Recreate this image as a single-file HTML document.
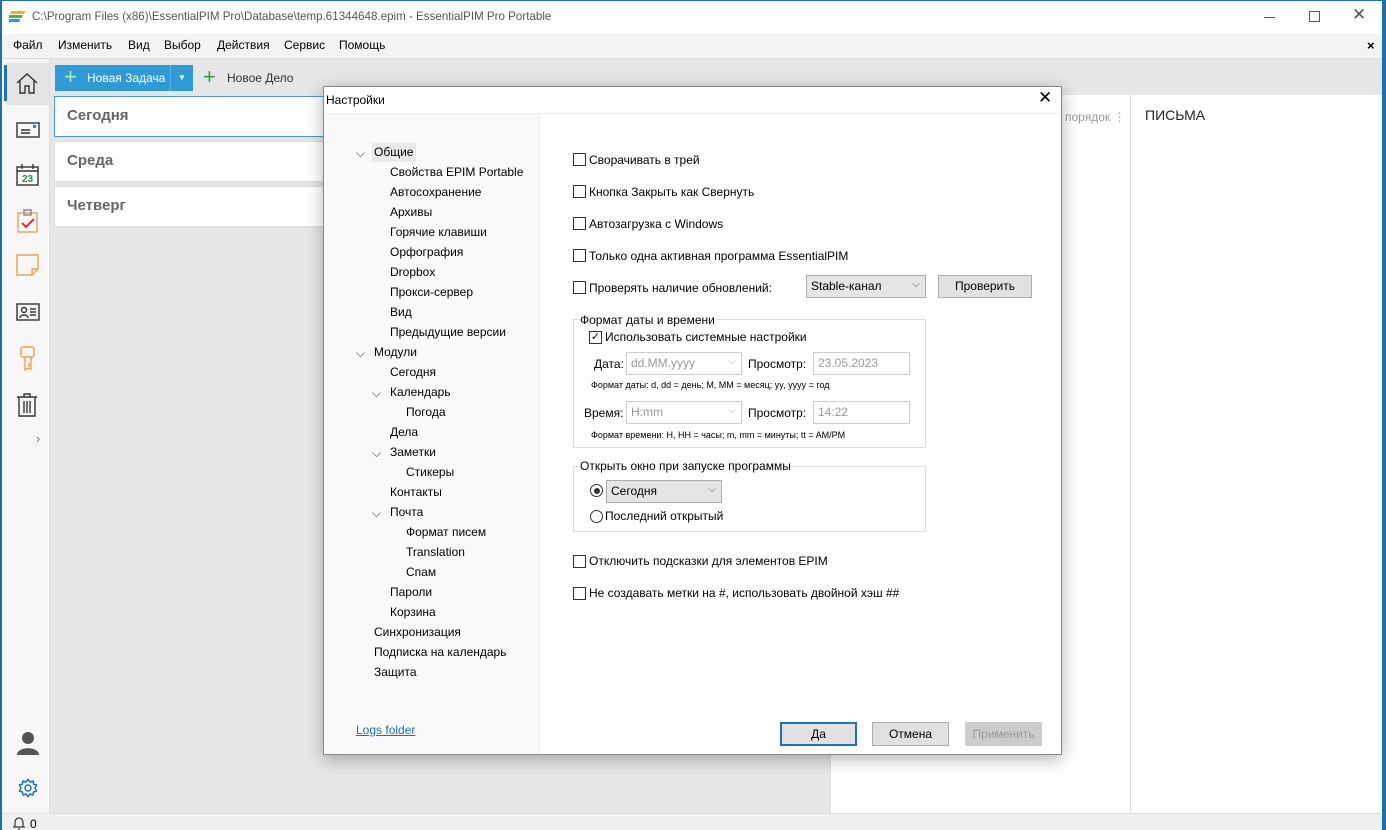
<!DOCTYPE html>
<html><head><meta charset="utf-8">
<style>
*{box-sizing:border-box;margin:0;padding:0}
body{width:1386px;height:830px;overflow:hidden;position:relative;background:#1e6fb0;font-family:"Liberation Sans","DejaVu Sans",sans-serif;font-size:12px;color:#000}
.a{position:absolute}
.win{left:2px;top:1px;width:1380px;height:829px;background:#fff;overflow:hidden}
.cb{width:13px;height:13px;border:1px solid #333;background:#fff}
.btn{background:#e1e1e1;border:1px solid #adadad;text-align:center;font-size:12px}
.combo{background:#e5e5e5;border:1px solid #adadad;font-size:12px;padding:3px 4px}
.dis{background:#fff;border:1px solid #ccc;color:#999;font-size:12px;padding:3px 4px}
.tree div{position:absolute;font-size:12px;white-space:nowrap}
.chev{font-size:10px;color:#444}
.m{position:absolute;top:37px;font-size:12px}
</style></head><body>
<div class="a win">
 <svg class="a" style="left:7px;top:8px" width="20" height="16"><rect x="3" y="2" width="14" height="3" fill="#f5b400" transform="skewX(-20)"/><rect x="2" y="6" width="14" height="3" fill="#4caf50" transform="skewX(-20)"/><rect x="1" y="10" width="14" height="3" fill="#2196f3" transform="skewX(-20)"/></svg>
 <div class="a" style="left:30px;top:9px;color:#555;font-size:11.6px">C:\Program Files (x86)\EssentialPIM Pro\Database\temp.61344648.epim - EssentialPIM Pro Portable</div>
 <div class="a" style="left:1262px;top:16px;width:11px;height:1px;background:#555"></div>
 <div class="a" style="left:1307px;top:10px;width:11px;height:11px;border:1px solid #555"></div>
 <div class="a" style="left:1350px;top:4px;font-size:17px;color:#555">✕</div>
 <div class="a" style="left:0;top:33px;width:1380px;height:25px;background:#f3f3f3;border-bottom:1px solid #ddd"></div>
 <div class="m" style="left:11px">Файл</div>
 <div class="m" style="left:56px">Изменить</div>
 <div class="m" style="left:126px">Вид</div>
 <div class="m" style="left:162px">Выбор</div>
 <div class="m" style="left:215px">Действия</div>
 <div class="m" style="left:282px">Сервис</div>
 <div class="m" style="left:337px">Помощь</div>
 <div class="a" style="left:1365px;top:37px;font-size:13px;font-weight:bold">×</div>
 <div class="a" style="left:48px;top:58px;width:1332px;height:36px;background:#e6e6e6"></div>
 <div class="a" style="left:48px;top:94px;width:780px;height:718px;background:#e6e6e6"></div>
 <div class="a" style="left:53px;top:64px;width:138px;height:26px;background:#2f9bd6"></div>
 <div class="a" style="left:168px;top:64px;width:1px;height:26px;background:#5bb2e0"></div>
 <div class="a" style="left:62px;top:63px;font-size:22px;color:#b5f5a0">+</div>
 <div class="a" style="left:85px;top:70px;color:#fff;font-size:12px">Новая Задача</div>
 <div class="a" style="left:176px;top:72px;color:#fff;font-size:8px">▼</div>
 <div class="a" style="left:201px;top:63px;font-size:22px;color:#3a9a4a">+</div>
 <div class="a" style="left:225px;top:70px;color:#333;font-size:12px">Новое Дело</div>
 <div class="a" style="left:52px;top:95px;width:300px;height:41px;background:#fff;border:1px solid #4a9ad6"></div>
 <div class="a" style="left:65px;top:106px;font-size:15px;font-weight:bold;color:#666">Сегодня</div>
 <div class="a" style="left:52px;top:140px;width:300px;height:41px;background:#fff;border:1px solid #ddd"></div>
 <div class="a" style="left:65px;top:151px;font-size:15px;font-weight:bold;color:#666">Среда</div>
 <div class="a" style="left:52px;top:185px;width:300px;height:41px;background:#fff;border:1px solid #ddd"></div>
 <div class="a" style="left:65px;top:196px;font-size:15px;font-weight:bold;color:#666">Четверг</div>
 <div class="a" style="left:828px;top:94px;width:300px;height:718px;background:#fff;border-left:1px solid #ddd"></div>
 <div class="a" style="left:1128px;top:94px;width:252px;height:718px;background:#fff;border-left:1px solid #ddd"></div>
 <div class="a" style="left:1063px;top:109px;color:#999;font-size:12px">порядок ⋮</div>
 <div class="a" style="left:1143px;top:106px;font-size:14px;color:#222">ПИСЬМА</div>
 <div class="a" style="left:0;top:812px;width:1380px;height:18px;background:#f0f0f0;border-top:1px solid #ddd"></div>
 <svg class="a" style="left:10px;top:815px" width="14" height="14" fill="none" stroke="#333" stroke-width="1.2"><path d="M3 11V6a4 4 0 0 1 8 0v5M1 11h12M6 13h2"/></svg>
 <div class="a" style="left:28px;top:816px;font-size:12px">0</div>
 <div class="a" style="left:0;top:58px;width:48px;height:754px;background:#f7f7f7;border-right:1px solid #ddd"></div>
 <div class="a" style="left:4px;top:62px;width:43px;height:42px;background:#e4e4e4"></div>
 <div class="a" style="left:2px;top:64px;width:3px;height:36px;background:#1a73c0"></div>
 <svg class="a" style="left:13px;top:70px" width="24" height="24" fill="none" stroke="#333" stroke-width="1.4"><path d="M2 12 L12 3 L22 12 M5 10 V22 H10 V15 H14 V22 H19 V10"/></svg>
 <svg class="a" style="left:14px;top:120px" width="24" height="18" fill="none" stroke="#333" stroke-width="1.4"><rect x="1" y="2" width="22" height="14"/><path d="M5 9h9M5 12h9"/><rect x="17" y="4" width="3" height="3" fill="#1a90d0" stroke="none"/></svg>
 <svg class="a" style="left:14px;top:162px" width="24" height="24" fill="none" stroke="#333" stroke-width="1.4"><rect x="1" y="4" width="21" height="18"/><path d="M1 8h21M6 1v5M17 1v5"/><text x="11.5" y="19" font-size="10" text-anchor="middle" fill="#2a8a4a" stroke="none" font-family="Liberation Sans" font-weight="bold">23</text></svg>
 <svg class="a" style="left:15px;top:208px" width="22" height="24" fill="none" stroke-width="1.4"><rect x="1" y="4" width="19" height="19" stroke="#e9a060"/><rect x="7" y="1" width="7" height="5" stroke="#888"/><path d="M5 14l4 4 8-8" stroke="#e03030" stroke-width="2"/></svg>
 <svg class="a" style="left:14px;top:253px" width="24" height="22" fill="none" stroke="#f0a050" stroke-width="1.4"><path d="M1 1h21v14l-6 6H1z M16 21v-6h6"/></svg>
 <svg class="a" style="left:14px;top:302px" width="24" height="19" fill="none" stroke="#333" stroke-width="1.4"><rect x="1" y="1" width="22" height="16"/><circle cx="8" cy="7" r="2.5"/><path d="M4 15c0-4 8-4 8 0M14 6h6M14 9h6M14 12h6"/></svg>
 <svg class="a" style="left:17px;top:345px" width="18" height="26" fill="none" stroke="#f0a050" stroke-width="1.4"><rect x="2" y="1" width="13" height="10" rx="2"/><path d="M6 11v13l3 -2 3 1v-3h-2v-2h2v-7"/></svg>
 <svg class="a" style="left:14px;top:392px" width="22" height="24" fill="none" stroke="#333" stroke-width="1.4"><path d="M1 4h20M8 4V1h6v3M3 4v19h16V4M8 8v12M11 8v12M14 8v12"/></svg>
 <div class="a" style="left:34px;top:430px;color:#777;font-size:13px">›</div>
 <svg class="a" style="left:14px;top:730px" width="24" height="24" fill="#555"><circle cx="12" cy="7" r="6"/><path d="M1 24c0-9 22-9 22 0z"/></svg>
 <svg class="a" style="left:16px;top:777px" width="20" height="20" fill="none" stroke="#1a73c0" stroke-width="1.5"><circle cx="10" cy="10" r="3"/><path d="M10 1.5l2 2.5 3-1 .5 3 3 1-1.5 3 1.5 3-3 1-.5 3-3-1-2 2.5-2-2.5-3 1-.5-3-3-1 1.5-3-1.5-3 3-1 .5-3 3 1z"/></svg>

 <div class="a" style="left:321px;top:85px;width:739px;height:669px;background:#fff;border:1px solid #888;box-shadow:0 4px 16px rgba(0,0,0,.3);overflow:hidden">
  <div class="a" style="left:0;top:26px;width:737px;height:1px;background:#eee"></div>
  <div class="a" style="left:0;top:27px;width:216px;height:640px;background:#f9f9f9;border-right:1px solid #eee"></div>
 <div class="a" style="left:-2px;top:-1px;width:741px;height:669px">
  <div class="a" style="left:4px;top:7px;font-size:12px">Настройки</div>
  <div class="a" style="left:716px;top:2px;font-size:17px">✕</div>
  <div class="a" style="left:50px;top:57px;width:44px;height:19px;background:#eaeaea"></div>
  <div class="tree">
   <div class="chev" style="left:34px;top:60px">⌵</div><div style="left:52px;top:59px">Общие</div>
   <div style="left:68px;top:79px">Свойства EPIM Portable</div>
   <div style="left:68px;top:99px">Автосохранение</div>
   <div style="left:68px;top:119px">Архивы</div>
   <div style="left:68px;top:139px">Горячие клавиши</div>
   <div style="left:68px;top:159px">Орфография</div>
   <div style="left:68px;top:179px">Dropbox</div>
   <div style="left:68px;top:199px">Прокси-сервер</div>
   <div style="left:68px;top:219px">Вид</div>
   <div style="left:68px;top:239px">Предыдущие версии</div>
   <div class="chev" style="left:34px;top:260px">⌵</div><div style="left:52px;top:259px">Модули</div>
   <div style="left:68px;top:279px">Сегодня</div>
   <div class="chev" style="left:50px;top:300px">⌵</div><div style="left:68px;top:299px">Календарь</div>
   <div style="left:84px;top:319px">Погода</div>
   <div style="left:68px;top:339px">Дела</div>
   <div class="chev" style="left:50px;top:360px">⌵</div><div style="left:68px;top:359px">Заметки</div>
   <div style="left:84px;top:379px">Стикеры</div>
   <div style="left:68px;top:399px">Контакты</div>
   <div class="chev" style="left:50px;top:420px">⌵</div><div style="left:68px;top:419px">Почта</div>
   <div style="left:84px;top:439px">Формат писем</div>
   <div style="left:84px;top:459px">Translation</div>
   <div style="left:84px;top:479px">Спам</div>
   <div style="left:68px;top:499px">Пароли</div>
   <div style="left:68px;top:519px">Корзина</div>
   <div style="left:52px;top:539px">Синхронизация</div>
   <div style="left:52px;top:559px">Подписка на календарь</div>
   <div style="left:52px;top:579px">Защита</div>
   <div style="left:34px;top:637px;color:#1a6fc0;text-decoration:underline">Logs folder</div>
  </div>
  <div class="a cb" style="left:251px;top:67px"></div><div class="a" style="left:267px;top:67px">Сворачивать в трей</div>
  <div class="a cb" style="left:251px;top:99px"></div><div class="a" style="left:267px;top:99px">Кнопка Закрыть как Свернуть</div>
  <div class="a cb" style="left:251px;top:131px"></div><div class="a" style="left:267px;top:131px">Автозагрузка с Windows</div>
  <div class="a cb" style="left:251px;top:163px"></div><div class="a" style="left:267px;top:163px">Только одна активная программа EssentialPIM</div>
  <div class="a cb" style="left:251px;top:195px"></div><div class="a" style="left:267px;top:195px">Проверять наличие обновлений:</div>
  <div class="a combo" style="left:484px;top:189px;width:120px;height:23px">Stable-канал<span style="position:absolute;right:5px;top:3px;font-size:10px;color:#555">⌵</span></div>
  <div class="a btn" style="left:616px;top:189px;width:94px;height:23px;line-height:21px">Проверить</div>
  <div class="a" style="left:251px;top:233px;width:353px;height:129px;border:1px solid #ddd"></div>
  <div class="a" style="left:257px;top:227px;background:#fff;padding:0 1px">Формат даты и времени</div>
  <div class="a cb" style="left:267px;top:245px;text-align:center;line-height:10px;font-size:11px">✓</div><div class="a" style="left:283px;top:244px">Использовать системные настройки</div>
  <div class="a" style="left:272px;top:271px">Дата:</div>
  <div class="a dis" style="left:304px;top:266px;width:116px;height:23px">dd.MM.yyyy<span style="position:absolute;right:5px;top:3px;font-size:10px;color:#aaa">⌵</span></div>
  <div class="a" style="left:426px;top:271px">Просмотр:</div>
  <div class="a dis" style="left:491px;top:266px;width:97px;height:23px">23.05.2023</div>
  <div class="a" style="left:269px;top:294px;font-size:9px">Формат даты: d, dd = день; M, MM = месяц; yy, yyyy = год</div>
  <div class="a" style="left:262px;top:320px">Время:</div>
  <div class="a dis" style="left:304px;top:315px;width:116px;height:23px">H:mm<span style="position:absolute;right:5px;top:3px;font-size:10px;color:#aaa">⌵</span></div>
  <div class="a" style="left:426px;top:320px">Просмотр:</div>
  <div class="a dis" style="left:491px;top:315px;width:97px;height:23px">14:22</div>
  <div class="a" style="left:269px;top:344px;font-size:9px">Формат времени: H, HH = часы; m, mm = минуты; tt = AM/PM</div>
  <div class="a" style="left:251px;top:380px;width:353px;height:66px;border:1px solid #ddd"></div>
  <div class="a" style="left:257px;top:373px;background:#fff;padding:0 1px">Открыть окно при запуске программы</div>
  <div class="a" style="left:268px;top:398px;width:13px;height:13px;border:1px solid #333;border-radius:50%"><div style="margin:2.5px;width:6px;height:6px;border-radius:50%;background:#333"></div></div>
  <div class="a combo" style="left:284px;top:394px;width:116px;height:23px">Сегодня<span style="position:absolute;right:5px;top:3px;font-size:10px;color:#555">⌵</span></div>
  <div class="a" style="left:268px;top:424px;width:13px;height:13px;border:1px solid #333;border-radius:50%"></div>
  <div class="a" style="left:283px;top:423px">Последний открытый</div>
  <div class="a cb" style="left:251px;top:469px"></div><div class="a" style="left:267px;top:468px">Отключить подсказки для элементов EPIM</div>
  <div class="a cb" style="left:251px;top:501px"></div><div class="a" style="left:267px;top:500px">Не создавать метки на #, использовать двойной хэш ##</div>
  <div class="a btn" style="left:458px;top:636px;width:77px;height:24px;line-height:20px;border:2px solid #1a73c0">Да</div>
  <div class="a btn" style="left:550px;top:636px;width:77px;height:24px;line-height:22px">Отмена</div>
  <div class="a btn" style="left:643px;top:636px;width:77px;height:24px;line-height:22px;color:#999;background:#ccc;border-color:#ccc">Применить</div>
 </div>
 </div>
</div>
</body></html>
